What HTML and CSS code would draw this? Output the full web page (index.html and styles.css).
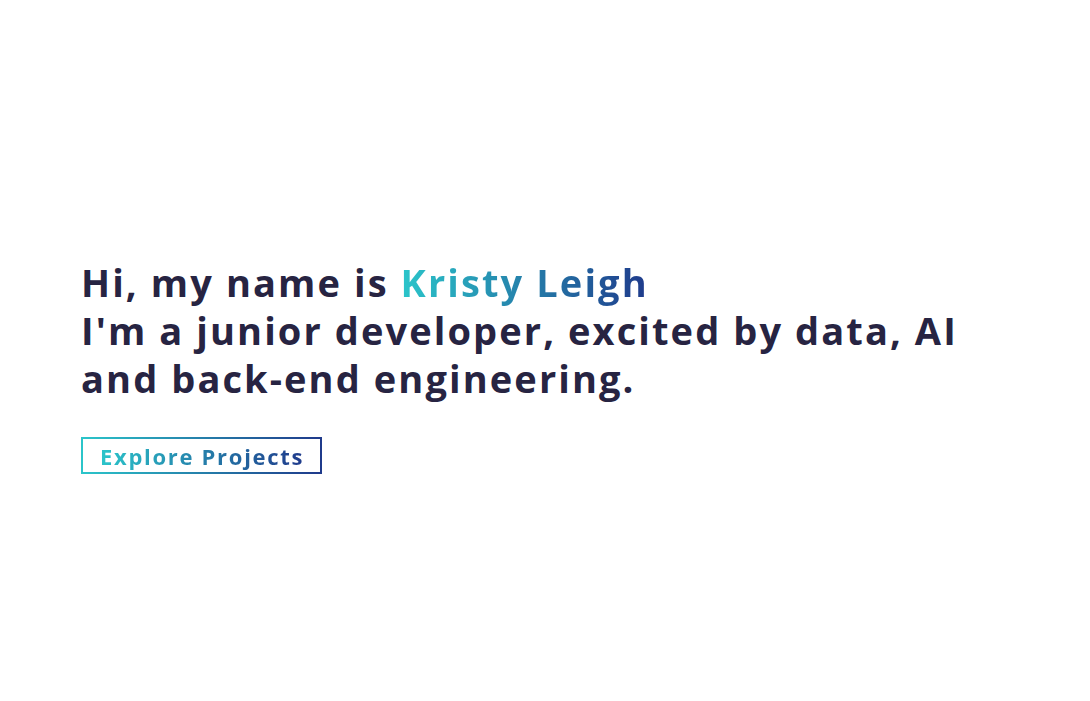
FILE: index.html
```html
<!DOCTYPE html>
<html lang="en">
<head>
<meta charset="utf-8">
<title>Kristy Leigh</title>
<link rel="stylesheet" href="styles.css">
</head>
<body>
<section class="hero">
  <h1 class="headline">Hi, my name is <span class="grad-text">Kristy Leigh</span><br>I'm a junior developer, excited by data, AI<br>and back-end engineering.</h1>
  <a class="btn" href="#projects"><span class="grad-text">Explore Projects</span></a>
</section>
</body>
</html>
```
FILE: styles.css
```css
* { box-sizing: border-box; }
html, body { margin: 0; padding: 0; background: #ffffff; }
body { font-family: "Open Sans", "DejaVu Sans", sans-serif; }
.hero {
  height: 100vh;
  display: flex;
  flex-direction: column;
  justify-content: center;
  align-items: flex-start;
  padding: 31px 81px 0;
}
.headline {
  margin: 0;
  font-size: 38px;
  line-height: 48px;
  font-weight: 700;
  color: #272442;
  letter-spacing: 2.1px;
}
.grad-text {
  background: linear-gradient(90deg, #2bc5ca 0%, #1f3a8b 100%);
  -webkit-background-clip: text;
  background-clip: text;
  color: transparent;
}
.btn {
  display: inline-flex;
  align-items: center;
  margin-top: 35px;
  height: 37px;
  padding: 0 16px 0 17px;
  border: 2px solid;
  border-image: linear-gradient(90deg, #2bc5ca, #1f3a8b) 1;
  font-size: 22px;
  font-weight: 700;
  letter-spacing: 1.7px;
  text-decoration: none;
}
```
